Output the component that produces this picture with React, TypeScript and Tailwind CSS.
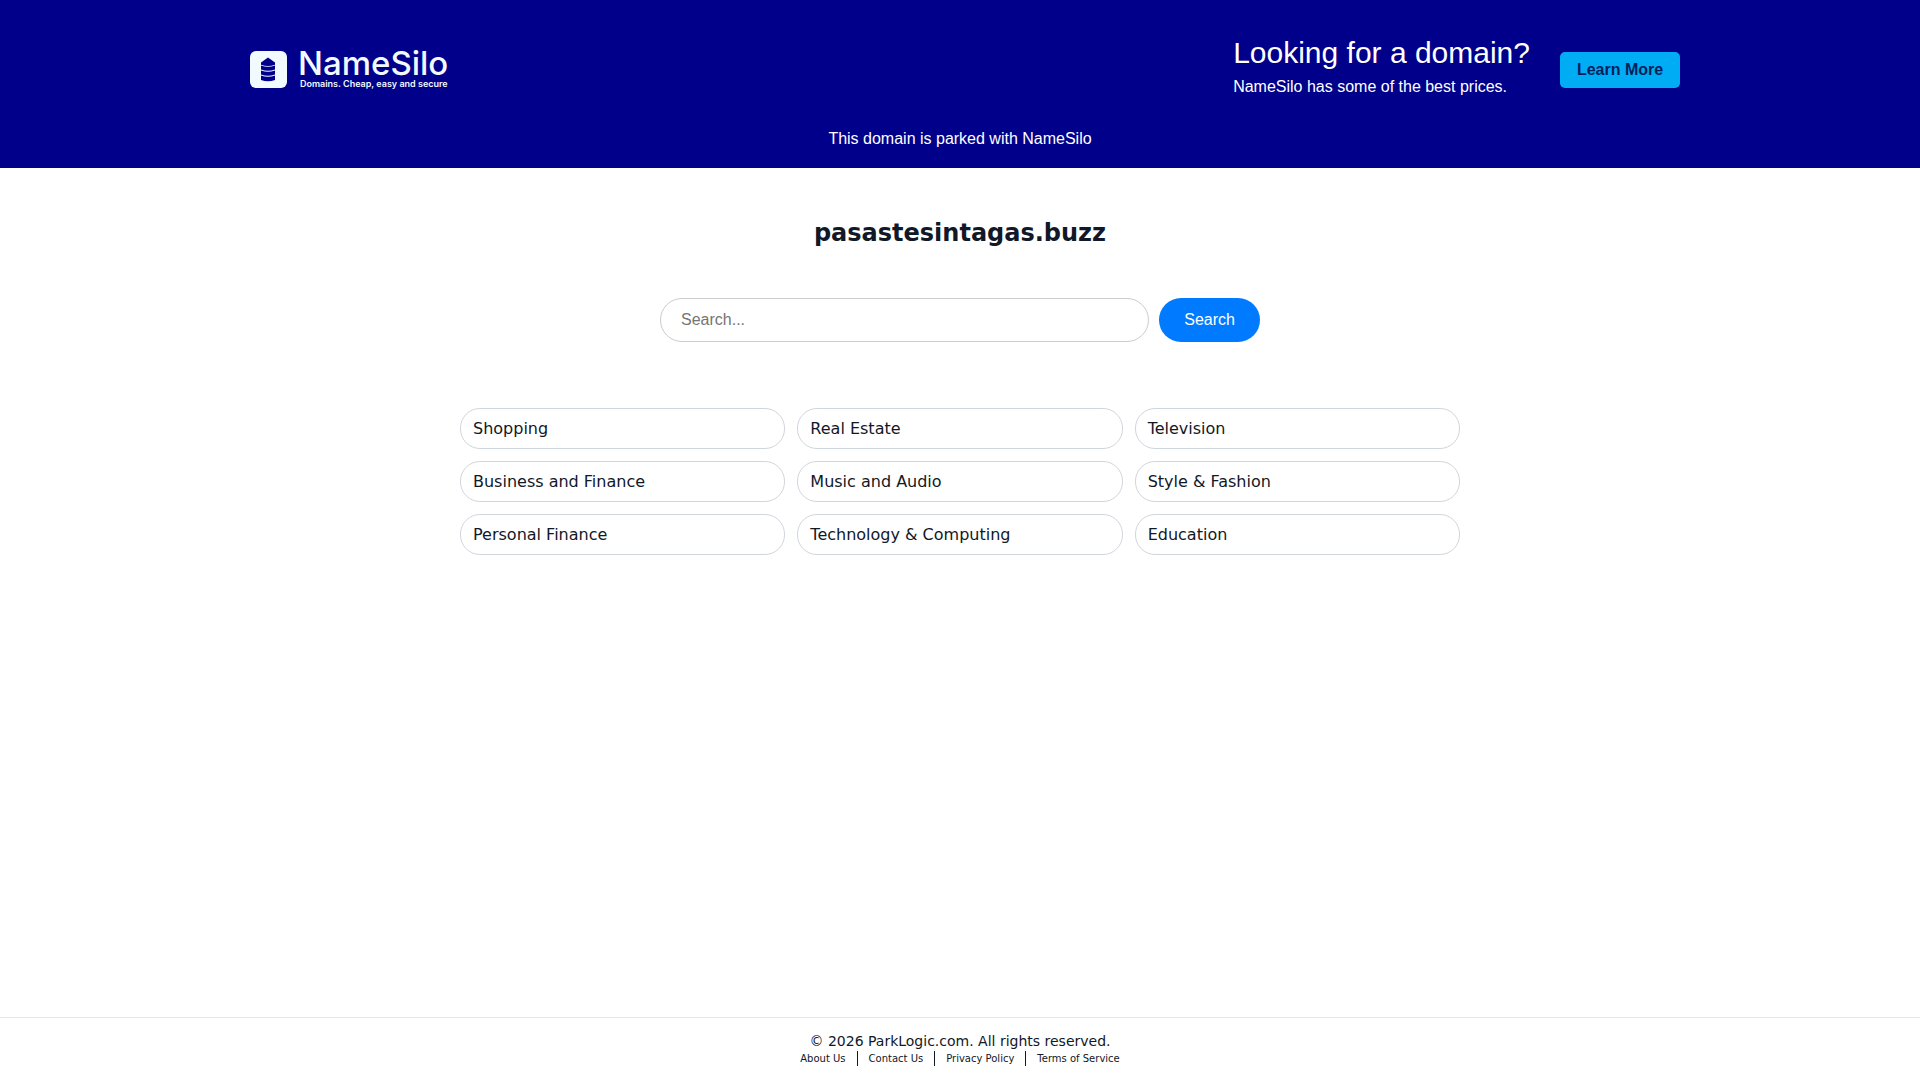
import { useState } from 'react'

const TOPICS = [
  'Shopping',
  'Real Estate',
  'Television',
  'Business and Finance',
  'Music and Audio',
  'Style & Fashion',
  'Personal Finance',
  'Technology & Computing',
  'Education',
]

const FOOTER_LINKS = ['About Us', 'Contact Us', 'Privacy Policy', 'Terms of Service']

function Logo() {
  return (
    <svg width="204" height="55" viewBox="0 -7 204 55" fill="#f0faff" role="img" aria-label="NameSilo">
      <rect x="0" y="1" width="37" height="37" rx="6" />
      {/* silo */}
      <g fill="#00008b">
        <path d="M11 14.8V12.4L18 7.6L25 12.4V14.8Q18 17.2 11 14.8Z" />
        <path d="M11 15.6Q18 18 25 15.6V19.6Q18 22 11 19.6Z" />
        <path d="M11 20.6Q18 23 25 20.6V24.6Q18 27 11 24.6Z" />
        <path d="M11 25.6Q18 28 25 25.6V30Q18 32.6 11 30Z" />
      </g>
      <text x="48" y="25" fontSize="33" fontWeight="500" fontFamily="Inter, sans-serif">
        NameSilo
      </text>
      <text x="50" y="37" fontSize="9" fontWeight="600" fontFamily="Inter, sans-serif">
        Domains. Cheap, easy and secure
      </text>
    </svg>
  )
}

function Header() {
  return (
    <header className="bg-[#00008b] font-['Liberation_Sans',Arial,sans-serif] text-white">
      <div className="mx-auto flex max-w-[1440px] items-center justify-between pt-[35px] pb-[7px] pl-2.5">
        <a href="#">
          <Logo />
        </a>
        <div className="flex items-center gap-[30px]">
          <div>
            <h2 className="mb-1 text-3xl">Looking for a domain?</h2>
            <p className="pb-1.5">NameSilo has some of the best prices.</p>
          </div>
          <a
            href="#"
            className="flex h-9 w-[120px] items-center justify-center rounded-[5px] bg-[#00adf5] font-bold text-[#00205b]"
          >
            Learn More
          </a>
        </div>
      </div>
      <p className="pt-[15px] pb-[17px] text-center">This domain is parked with NameSilo</p>
    </header>
  )
}

export default function App() {
  const [query, setQuery] = useState('')

  return (
    <div className="flex min-h-screen flex-col bg-white font-['DejaVu_Sans',sans-serif] text-[#111827]">
      <Header />

      <main className="flex-1 pt-[49px]">
        <h1 className="text-center text-2xl font-bold">pasastesintagas.buzz</h1>

        <form
          onSubmit={e => e.preventDefault()}
          className="mx-auto mt-[49px] flex h-11 max-w-[600px] gap-2.5 font-['Liberation_Sans',Arial,sans-serif]"
        >
          <input
            type="text"
            value={query}
            onChange={e => setQuery(e.target.value)}
            placeholder="Search..."
            aria-label="Search"
            className="min-w-0 flex-1 rounded-full border border-[#ccc] px-5 placeholder:text-[#757575]"
          />
          <button type="submit" className="rounded-full bg-[#007bff] px-[25px] text-white">
            Search
          </button>
        </form>

        <ul className="mx-auto mt-[66px] grid max-w-[1000px] grid-cols-3 gap-3">
          {TOPICS.map(topic => (
            <li key={topic}>
              <a
                href="#"
                className="flex h-[41px] items-center rounded-[20px] border border-gray-300 px-3"
              >
                {topic}
              </a>
            </li>
          ))}
        </ul>
      </main>

      <footer className="border-t border-gray-200 pt-[13px] pb-[14px] text-center">
        <p className="text-sm">© 2026 ParkLogic.com. All rights reserved.</p>
        <nav className="flex justify-center divide-x divide-[#111827]">
          {FOOTER_LINKS.map(label => (
            <a key={label} href="#" className="px-[11px] text-[10px] leading-[15px]">
              {label}
            </a>
          ))}
        </nav>
      </footer>
    </div>
  )
}
